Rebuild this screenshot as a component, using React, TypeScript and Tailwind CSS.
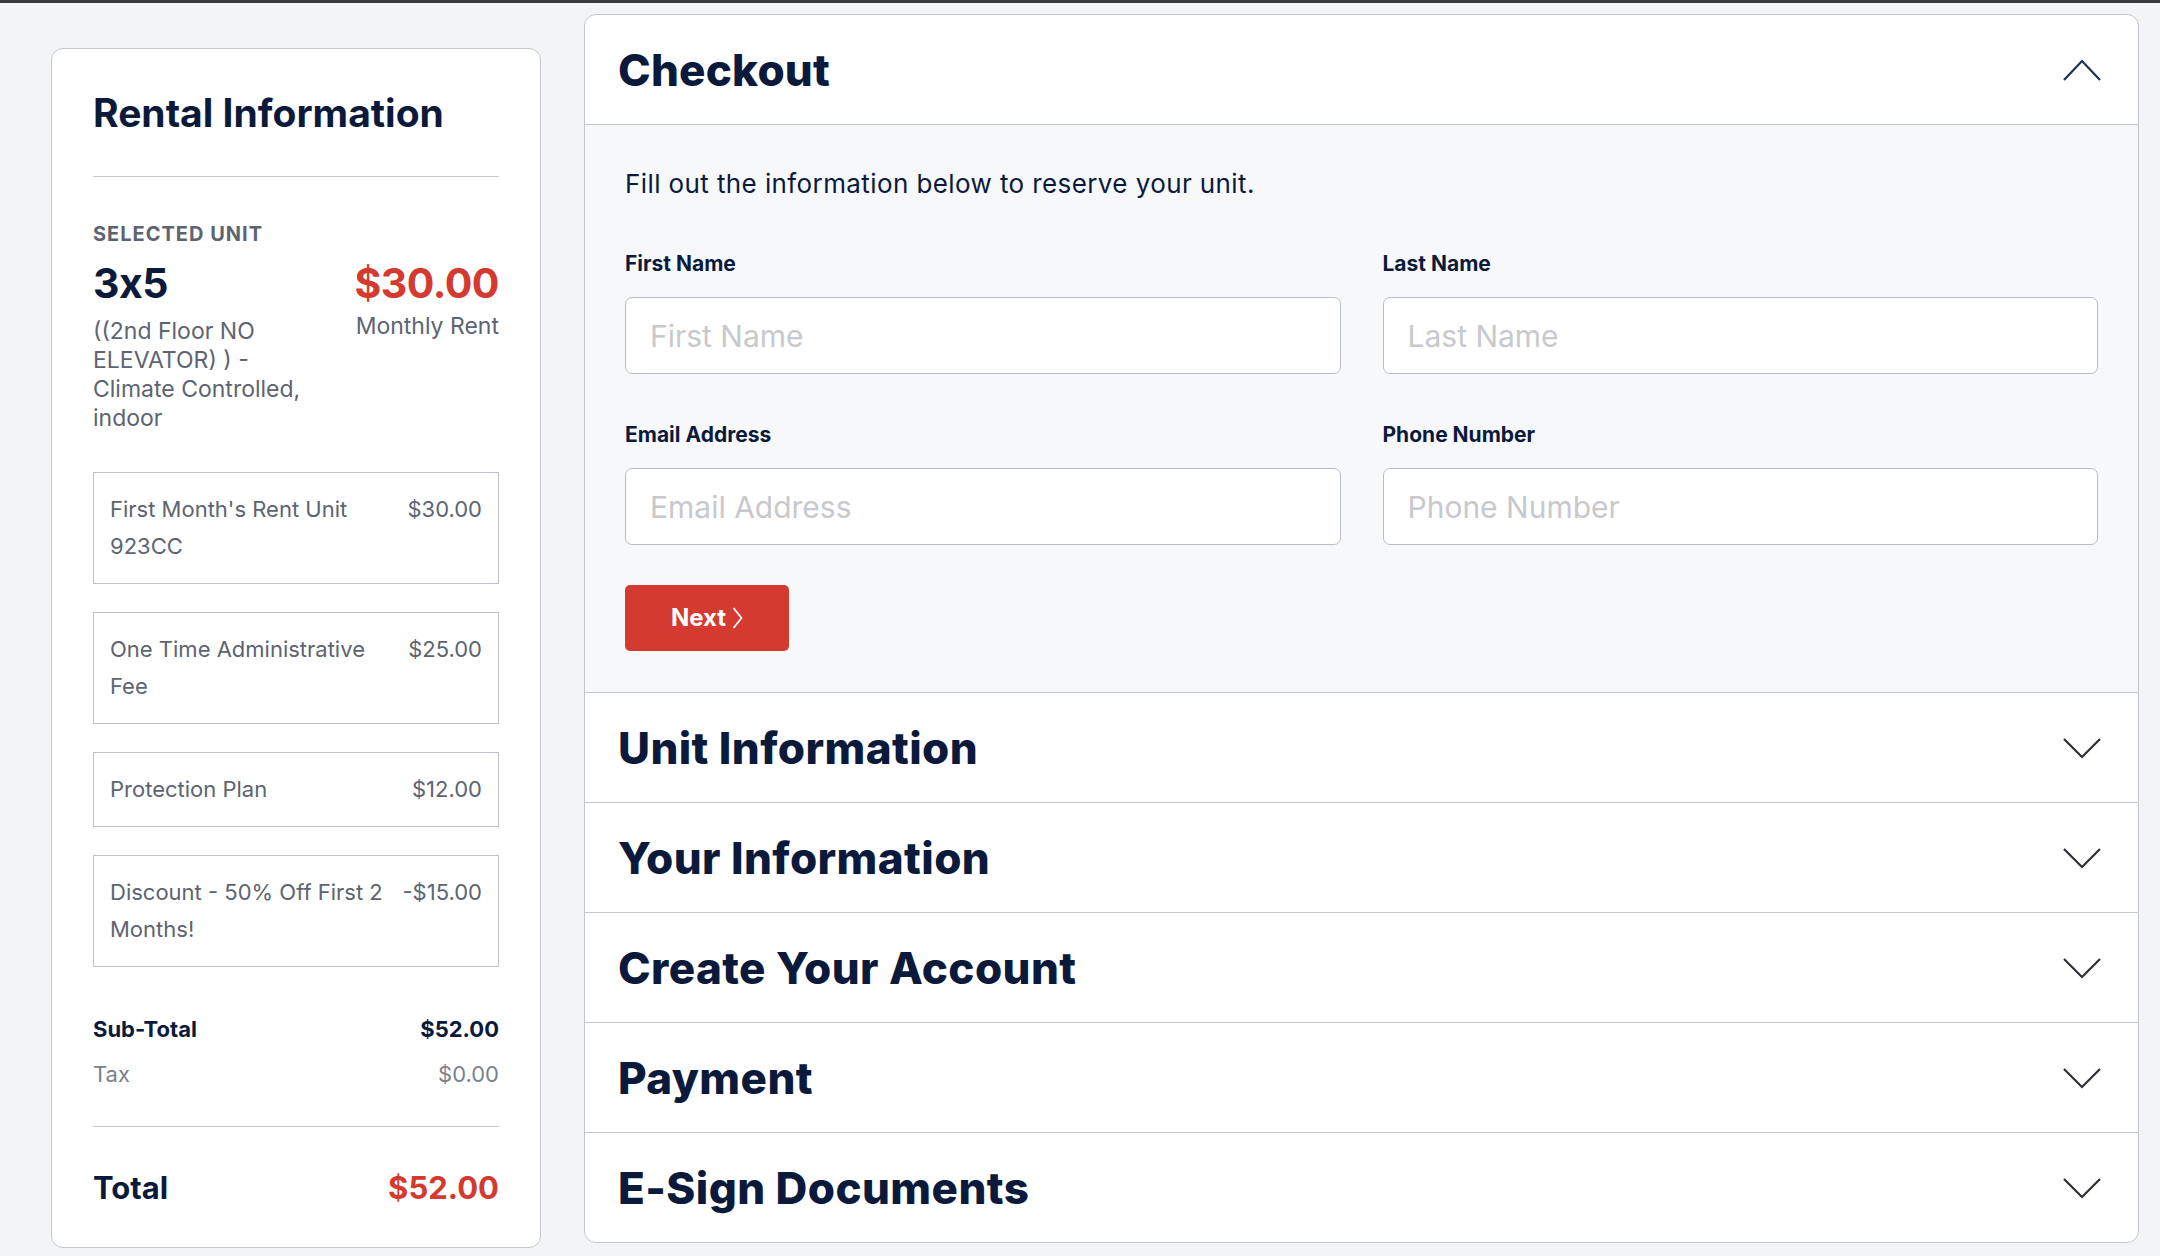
import React from 'react';

const NAVY = 'text-[#0b1a3b]';
const HEAD = "font-['Inter',sans-serif]";

// line items on the rental summary
const LINE_ITEMS = [
  { label: "First Month's Rent Unit 923CC", amount: '$30.00' },
  { label: 'One Time Administrative Fee', amount: '$25.00' },
  { label: 'Protection Plan', amount: '$12.00' },
  { label: 'Discount - 50% Off First 2 Months!', amount: '-$15.00' },
];

const SECTIONS = ['Unit Information', 'Your Information', 'Create Your Account', 'Payment', 'E-Sign Documents'];

function Chevron({ up = false }: { up?: boolean }) {
  return (
    <svg width="38" height="22" viewBox="0 0 38 22" fill="none" className="shrink-0">
      {up ? (
        <polyline points="1,21 19,2 37,21" stroke="#1b2f5a" strokeWidth="2.2" strokeLinejoin="miter" />
      ) : (
        <polyline points="1,2 19,20 37,2" stroke="#2b2f36" strokeWidth="2.2" strokeLinejoin="miter" />
      )}
    </svg>
  );
}

function Field({ label, placeholder }: { label: string; placeholder: string }) {
  return (
    <div className="flex flex-col">
      <label className={`${HEAD} text-[21px] font-bold leading-[28px] ${NAVY}`}>{label}</label>
      <input
        placeholder={placeholder}
        className="mt-[19px] h-[77px] w-full rounded-[7px] border border-[#b9bdc4] bg-white px-[24px] text-[30px] text-[#0b1a3b] outline-none placeholder:text-[#c8c9cc]"
      />
    </div>
  );
}

function RentalInformation() {
  return (
    <div className="mt-[34px] w-[490px] shrink-0 rounded-[12px] border border-[#c3c7cd] bg-white px-[41px] pt-[41px] pb-[41px]">
      <h2 className={`${HEAD} text-[39px] font-bold leading-[46px] ${NAVY}`}>Rental Information</h2>
      <div className="mt-[40px] border-t border-[#c3c7cd]" />

      {/* selected unit */}
      <div className={`${HEAD} mt-[45px] text-[20px] font-bold uppercase leading-[24px] tracking-[1px] text-[#5d6470]`}>
        Selected Unit
      </div>
      <div className="mt-[13px] flex justify-between gap-4">
        <div className="w-[240px]">
          <div className={`${HEAD} text-[41px] font-bold leading-[48px] tracking-[-0.5px] ${NAVY}`}>3x5</div>
          <div className="mt-[10px] text-[23px] leading-[29px] text-[#5d6470]">
            ((2nd Floor NO ELEVATOR) ) - Climate Controlled, indoor
          </div>
        </div>
        <div className="flex flex-col items-end">
          <div className={`${HEAD} text-[41px] font-bold leading-[48px] tracking-[-0.5px] text-[#d43a2f]`}>$30.00</div>
          <div className="mt-[5px] text-[23px] leading-[29px] text-[#5d6470]">Monthly Rent</div>
        </div>
      </div>

      {/* charges */}
      <div className="mt-[39px] flex flex-col gap-[28px]">
        {LINE_ITEMS.map(item => (
          <div
            key={item.label}
            className="flex justify-between gap-[18px] border border-[#bfc3c9] px-[16px] py-[18px] text-[22px] leading-[37px] text-[#5d6470]"
          >
            <span>{item.label}</span>
            <span className="shrink-0">{item.amount}</span>
          </div>
        ))}
      </div>

      {/* totals */}
      <div className={`${HEAD} mt-[48px] flex justify-between text-[22px] font-bold leading-[28px] ${NAVY}`}>
        <span>Sub-Total</span>
        <span>$52.00</span>
      </div>
      <div className="mt-[17px] flex justify-between text-[22px] leading-[28px] text-[#7b818a]">
        <span>Tax</span>
        <span>$0.00</span>
      </div>
      <div className="mt-[38px] border-t border-[#c3c7cd]" />
      <div className={`${HEAD} mt-[43px] flex items-center justify-between text-[31px] font-bold leading-[36px]`}>
        <span className="text-[#0b1a3b]">Total</span>
        <span className="text-[#d43a2f]">$52.00</span>
      </div>
    </div>
  );
}

function Checkout() {
  return (
    <div className="flex-1 overflow-hidden rounded-[12px] border border-[#c3c7cd] bg-white">
      {/* open section */}
      <div className="flex h-[109px] items-center justify-between pl-[33px] pr-[37px]">
        <h2 className={`${HEAD} text-[44px] font-extrabold tracking-[0.2px] ${NAVY}`}>Checkout</h2>
        <Chevron up />
      </div>
      <div className="border-t border-[#c3c7cd] bg-[#f7f8fa] px-[40px] pt-[41px] pb-[41px]">
        <p className={`text-[26px] leading-[36px] tracking-[0.4px] ${NAVY}`}>Fill out the information below to reserve your unit.</p>
        <div className="mt-[48px] grid grid-cols-2 gap-x-[42px] gap-y-[47px]">
          <Field label="First Name" placeholder="First Name" />
          <Field label="Last Name" placeholder="Last Name" />
          <Field label="Email Address" placeholder="Email Address" />
          <Field label="Phone Number" placeholder="Phone Number" />
        </div>
        <button className={`${HEAD} mt-[40px] flex h-[66px] w-[164px] items-center justify-center gap-[6px] rounded-[5px] bg-[#d43a2f] text-[24px] font-bold text-white`}>
          Next
          <svg width="11" height="22" viewBox="0 0 11 22" fill="none">
            <polyline points="1.5,1 9.5,11 1.5,21" stroke="white" strokeWidth="1.8" />
          </svg>
        </button>
      </div>

      {/* collapsed sections */}
      {SECTIONS.map(title => (
        <div
          key={title}
          className="flex h-[110px] items-center justify-between border-t border-[#c3c7cd] pl-[33px] pr-[37px]"
        >
          <h2 className={`${HEAD} text-[44px] font-extrabold tracking-[0.4px] ${NAVY}`}>{title}</h2>
          <Chevron />
        </div>
      ))}
    </div>
  );
}

export default function App() {
  return (
    <div className="min-h-screen bg-[#f3f4f6] font-['Inter',sans-serif]">
      <div className="h-[3px] bg-[#3a3a3a]" />
      <div className="flex items-start gap-[43px] pt-[11px] pr-[21px] pl-[51px] pb-[10px]">
        <RentalInformation />
        <Checkout />
      </div>
    </div>
  );
}
